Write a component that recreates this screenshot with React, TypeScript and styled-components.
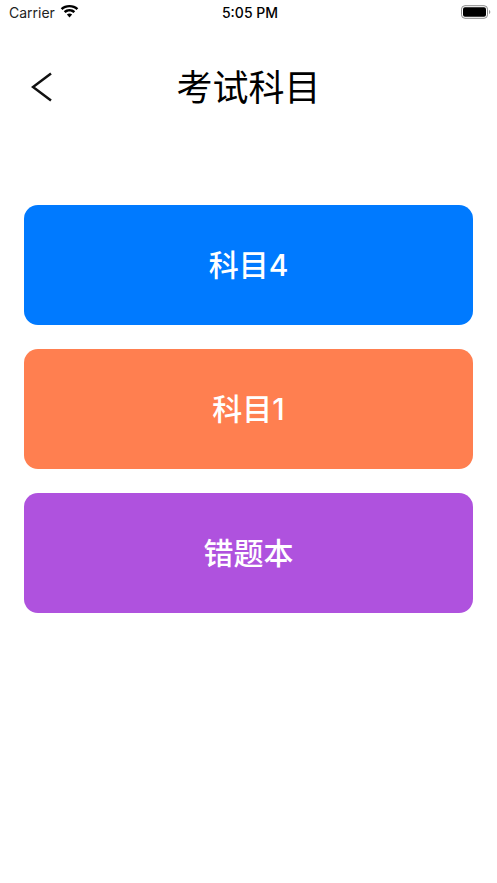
// PLUGINS IMPORTS //
import React from 'react'
import styled, { createGlobalStyle } from 'styled-components'

/////////////////////////////////////////////////////////////////////////////

const subjects = [
  { label: '科目4', color: '#007aff' },
  { label: '科目1', color: '#ff7f50' },
  { label: '错题本', color: '#af52de' },
]

const WifiIcon = () => (
  <svg width='19' height='14' viewBox='0 0 19 14'>
    <path
      d='M9.500 2.300c2.700 0 5.100 1 7 2.800l1.800-1.900C15.900 1 12.900 0 9.500 0S3.100 1 .7 3.200l1.800 1.900c1.900-1.800 4.300-2.800 7-2.800z'
      fill='#000'
    />
    <path
      d='M9.500 6.500c1.500 0 2.900.6 4 1.600l1.700-1.800C13.700 4.900 11.700 4.100 9.500 4.100s-4.200.8-5.700 2.200l1.700 1.800c1.100-1 2.500-1.600 4-1.600z'
      fill='#000'
    />
    <path
      d='M9.500 8.400c-1 0-1.900.4-2.600 1l2.600 3.100 2.600-3.100c-.7-.6-1.600-1-2.600-1z'
      fill='#000'
    />
  </svg>
)

const BatteryIcon = () => (
  <svg width='30' height='14' viewBox='0 0 30 14'>
    <rect x='0.5' y='0.700' width='26' height='12.600' rx='3.500' fill='none' stroke='#8a8a8a' />
    <rect x='2' y='2.200' width='23' height='9.600' rx='2' fill='#000' />
    <path d='M28 5v4c.8-.3 1.300-1.100 1.300-2s-.5-1.700-1.300-2z' fill='#9a9a9a' />
  </svg>
)

const BackIcon = () => (
  <svg width='22' height='30' viewBox='0 0 22 30'>
    <path d='M20 1.500 L2 15 L20 28.500' fill='none' stroke='#111' strokeWidth='2.500' />
  </svg>
)

const App: React.FC = () => {
  return (
    <PageView>
      <GlobalStyle />
      <StatusBar>
        <CarrierGroup>
          <CarrierText>Carrier</CarrierText>
          <WifiIcon />
        </CarrierGroup>
        <TimeText>5:05 PM</TimeText>
        <BatteryGroup>
          <BatteryIcon />
        </BatteryGroup>
      </StatusBar>
      <Header>
        <BackButton>
          <BackIcon />
        </BackButton>
        <Title>考试科目</Title>
      </Header>
      <SubjectList>
        {subjects.map((subject) => (
          <SubjectButton key={subject.label} color={subject.color}>
            {subject.label}
          </SubjectButton>
        ))}
      </SubjectList>
    </PageView>
  )
}

// Styles

const GlobalStyle = createGlobalStyle`
  html, body {
    margin: 0;
    padding: 0;
    background: #fff;
  }
`

const PageView = styled.div`
  width: 497px;
  height: 883px;
  overflow: hidden;
  background: #fff;
  color: #000;
  font-family: 'Inter', 'Noto Sans CJK SC', sans-serif;
`

const StatusBar = styled.div`
  display: grid;
  grid-template-columns: 1fr auto 1fr;
  align-items: center;
  height: 24px;
  padding: 0 6px 0 9px;
`

const CarrierGroup = styled.div`
  display: flex;
  align-items: center;
  gap: 5px;
`

const CarrierText = styled.span`
  font-size: 14px;
  color: #222;
`

const TimeText = styled.span`
  font-size: 14px;
  font-weight: 500;
`

const BatteryGroup = styled.div`
  display: flex;
  justify-content: flex-end;
`

const Header = styled.div`
  position: relative;
  display: flex;
  justify-content: center;
  align-items: center;
  height: 60px;
  margin-top: 31px;
`

const BackButton = styled.div`
  position: absolute;
  left: 31px;
  top: 17px;
  display: flex;
`

const Title = styled.h1`
  margin: 0;
  font-size: 36px;
  font-weight: 400;
  line-height: 60px;
  font-family: 'Noto Sans CJK SC', sans-serif;
`

const SubjectList = styled.div`
  display: flex;
  flex-direction: column;
  gap: 24px;
  margin-top: 90px;
  padding: 0 24px;
`

const SubjectButton = styled.div<{ color: string }>`
  display: flex;
  align-items: center;
  justify-content: center;
  box-sizing: border-box;
  height: 120px;
  padding-bottom: 4px;
  border-radius: 14px;
  background: ${(props) => props.color};
  color: #fff;
  font-size: 30px;
  font-weight: 500;
  font-family: 'Inter', 'Noto Sans CJK SC', sans-serif;
`

export default App
